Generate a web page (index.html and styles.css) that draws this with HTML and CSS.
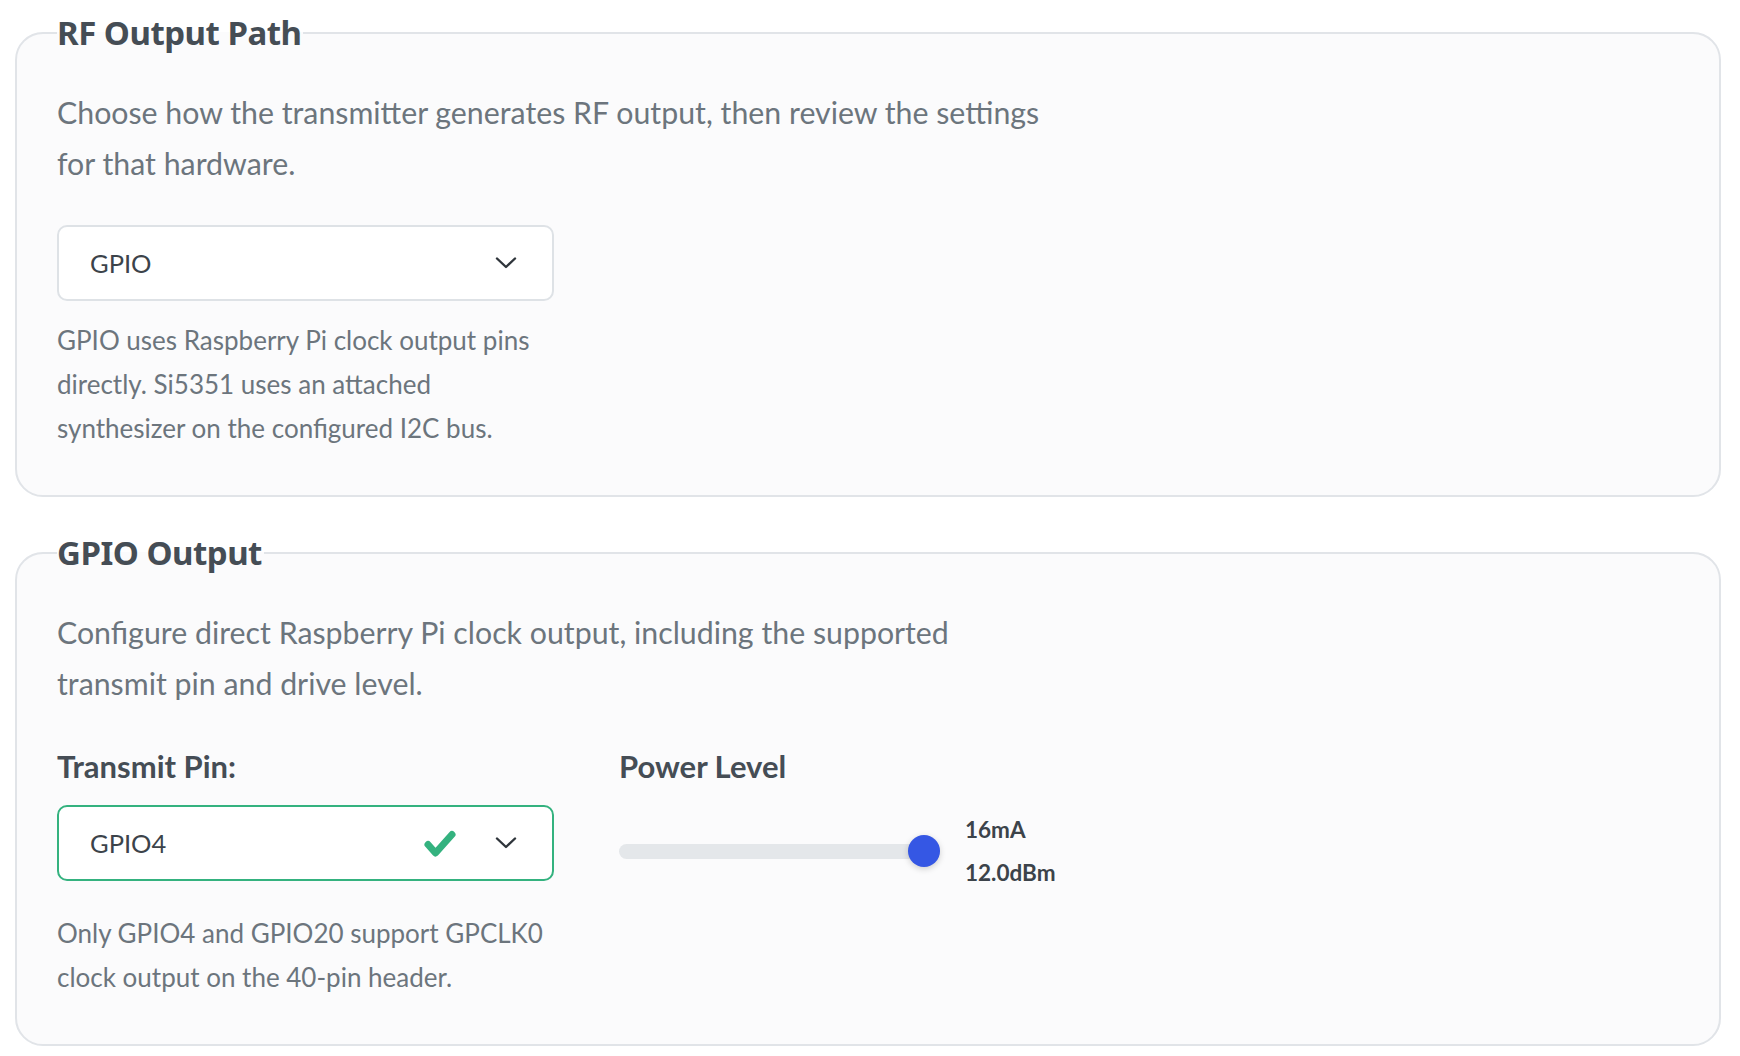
FILE: index.html
```html
<!DOCTYPE html>
<html lang="en">

<head>
    <meta charset="UTF-8">
    <meta name="viewport" content="width=device-width, initial-scale=1.0">
    <title>Transmitter Settings</title>
    <link rel="stylesheet" href="styles.css">
</head>

<body>
    <main class="settings">
        <!-- RF output path selection -->
        <fieldset class="panel">
            <legend class="panel-title">RF Output Path</legend>
            <p class="panel-desc">Choose how the transmitter generates RF output, then review the settings for that hardware.</p>

            <div class="field">
                <div class="select">
                    <span class="select-value">GPIO</span>
                    <svg class="chevron" width="22" height="12" viewBox="0 0 22 12">
                        <path d="M2 1.5 L11 10 L20 1.5" />
                    </svg>
                </div>
                <p class="help">GPIO uses Raspberry Pi clock output pins directly. Si5351 uses an attached synthesizer on the configured I2C bus.</p>
            </div>
        </fieldset>

        <!-- GPIO clock output settings -->
        <fieldset class="panel">
            <legend class="panel-title">GPIO Output</legend>
            <p class="panel-desc">Configure direct Raspberry Pi clock output, including the supported transmit pin and drive level.</p>

            <div class="field-row">
                <div class="field">
                    <label class="field-label">Transmit Pin:</label>
                    <div class="select is-valid">
                        <span class="select-value">GPIO4</span>
                        <svg class="check" width="34" height="29" viewBox="0 0 34 29">
                            <path d="M5 15.5 L12.5 24 L29 5.5" />
                        </svg>
                        <svg class="chevron" width="22" height="12" viewBox="0 0 22 12">
                            <path d="M2 1.5 L11 10 L20 1.5" />
                        </svg>
                    </div>
                    <p class="help help-spaced">Only GPIO4 and GPIO20 support GPCLK0 clock output on the 40-pin header.</p>
                </div>

                <div class="field">
                    <label class="field-label">Power Level</label>
                    <div class="power">
                        <input class="power-slider" type="range" min="0" max="7" value="7">
                        <div class="power-values">
                            <span>16mA</span>
                            <span>12.0dBm</span>
                        </div>
                    </div>
                </div>
            </div>
        </fieldset>
    </main>
</body>

</html>
```

FILE: styles.css
```css
* {
    box-sizing: border-box;
}

body {
    margin: 0;
    padding: 0;
    background: #ffffff;
    font-family: 'Lato', 'Roboto', sans-serif;
    color: #454d55;
}

.settings {
    display: flex;
    flex-direction: column;
    gap: 37px;
    padding: 14px 19px 0 15px;
}

/* Panels are plain fieldsets with the legend sitting on the border */
.panel {
    margin: 0;
    min-width: 0;
    padding: 35px 40px 45px 40px;
    border: 2px solid #e1e4e8;
    border-radius: 28px;
    background: #fbfbfc;
}

.panel-title {
    padding: 0 2px 0 0;
    font-family: 'Noto Sans', 'Roboto Condensed', sans-serif;
    font-stretch: semi-condensed;
    font-weight: 700;
    font-size: 33px;
    line-height: 38px;
    letter-spacing: -0.5px;
    color: #454d55;
}

.panel-desc {
    margin: 0 0 36px 0;
    max-width: 1000px;
    font-size: 30.3px;
    line-height: 51px;
    color: #6c757d;
}

.field-row {
    display: flex;
    gap: 65px;
}

.field {
    width: 497px;
}

.field-label {
    display: block;
    margin-bottom: 18px;
    font-size: 31px;
    font-weight: 700;
    line-height: 42px;
    color: #454d55;
}

/* Select box */
.select {
    display: flex;
    align-items: center;
    height: 76px;
    padding: 0 35px 0 31px;
    border: 2px solid #dee2e6;
    border-radius: 10px;
    background: #ffffff;
}

.select.is-valid {
    border-color: #34b27f;
}

.select-value {
    flex: 1;
    font-size: 25.5px;
    color: #3c434a;
}

.chevron path {
    fill: none;
    stroke: #2f353b;
    stroke-width: 2.4;
    stroke-linecap: round;
    stroke-linejoin: round;
}

.check {
    margin-right: 38px;
}

.check path {
    fill: none;
    stroke: #34b27f;
    stroke-width: 7;
    stroke-linecap: round;
    stroke-linejoin: round;
}

.help {
    margin: 17px 0 0 0;
    font-size: 26px;
    line-height: 44px;
    color: #6c757d;
}

.help-spaced {
    margin-top: 30px;
}

/* Power level slider */
.power {
    display: flex;
    align-items: center;
    gap: 25px;
    height: 92px;
}

.power-slider {
    -webkit-appearance: none;
    appearance: none;
    width: 321px;
    height: 15px;
    margin: 0;
    border-radius: 8px;
    background: #e4e7ea;
    outline: none;
}

.power-slider::-webkit-slider-thumb {
    -webkit-appearance: none;
    appearance: none;
    width: 32px;
    height: 32px;
    border-radius: 50%;
    background: #3557e4;
    box-shadow: 0 2px 6px rgba(0, 0, 0, 0.18);
    cursor: pointer;
}

.power-values {
    display: flex;
    flex-direction: column;
    font-size: 22.5px;
    font-weight: 700;
    line-height: 43px;
    color: #3c434a;
}
```
